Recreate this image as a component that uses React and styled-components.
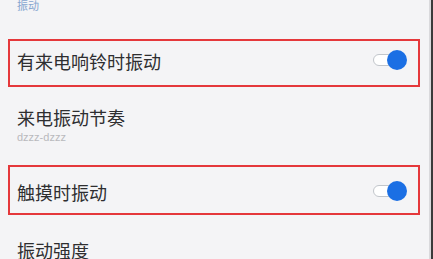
import React from "react"
import styled, { createGlobalStyle } from "styled-components"

const GlobalStyle = createGlobalStyle`
  html, body {
    margin: 0;
    padding: 0;
    background: #3a3a3a;
    overflow: hidden;
  }
  body {
    font-family: "Noto Sans CJK SC", "Noto Sans", sans-serif;
  }
`

const Toggle = ({ on }) => (
  <Switch>
    <Track />
    {on && <Knob />}
  </Switch>
)

export default () => (
  <>
    <GlobalStyle />
    <Screen>
      <SectionTitle>振动</SectionTitle>
      <Row $h={48} $lift={5} $marked>
        <Label>有来电响铃时振动</Label>
        <Toggle on />
      </Row>
      <Row $h={78} $lift={4}>
        <TextBlock>
          <Label>来电振动节奏</Label>
          <Sub>dzzz-dzzz</Sub>
        </TextBlock>
      </Row>
      <Row $h={50} $lift={-4} $marked>
        <Label>触摸时振动</Label>
        <Toggle on />
      </Row>
      <Row $h={70}>
        <Label>振动强度</Label>
      </Row>
    </Screen>
  </>
)

const Screen = styled.div`
  width: 429px;
  height: 259px;
  background: #f4f4f6;
  border-right: 2px solid #d9d9dc;
  overflow: hidden;
`

const SectionTitle = styled.div`
  height: 39px;
  padding-left: 17px;
  font-size: 11px;
  line-height: 11px;
  color: #86a5cf;
`

const Row = styled.div`
  display: flex;
  align-items: center;
  justify-content: space-between;
  box-sizing: border-box;
  height: ${(p) => p.$h}px;
  margin: 0 9px 0 8px;
  padding: ${(p) => (p.$lift < 0 ? -p.$lift : 0)}px 11px
    ${(p) => (p.$lift > 0 ? p.$lift : 0)}px 7px;
  border: 2px solid ${(p) => (p.$marked ? "#e5383b" : "transparent")};
`

const TextBlock = styled.div`
  display: flex;
  flex-direction: column;
  gap: 2px;
`

const Label = styled.div`
  font-size: 18px;
  line-height: 24px;
  color: #2e2e30;
`

const Sub = styled.div`
  font-family: "Liberation Sans", Arial, sans-serif;
  font-size: 11px;
  line-height: 12px;
  color: #b9b9bd;
`

const Switch = styled.div`
  position: relative;
  width: 34px;
  height: 20px;
  display: flex;
  align-items: center;
  margin-bottom: 2px;
`

const Track = styled.div`
  width: 28px;
  height: 12px;
  box-sizing: border-box;
  border: 1.5px solid #c2c6cb;
  border-radius: 6px;
  background: #ffffff;
`

const Knob = styled.div`
  position: absolute;
  right: 0;
  top: 0;
  width: 20px;
  height: 20px;
  border-radius: 50%;
  background: #1b6fe4;
`
